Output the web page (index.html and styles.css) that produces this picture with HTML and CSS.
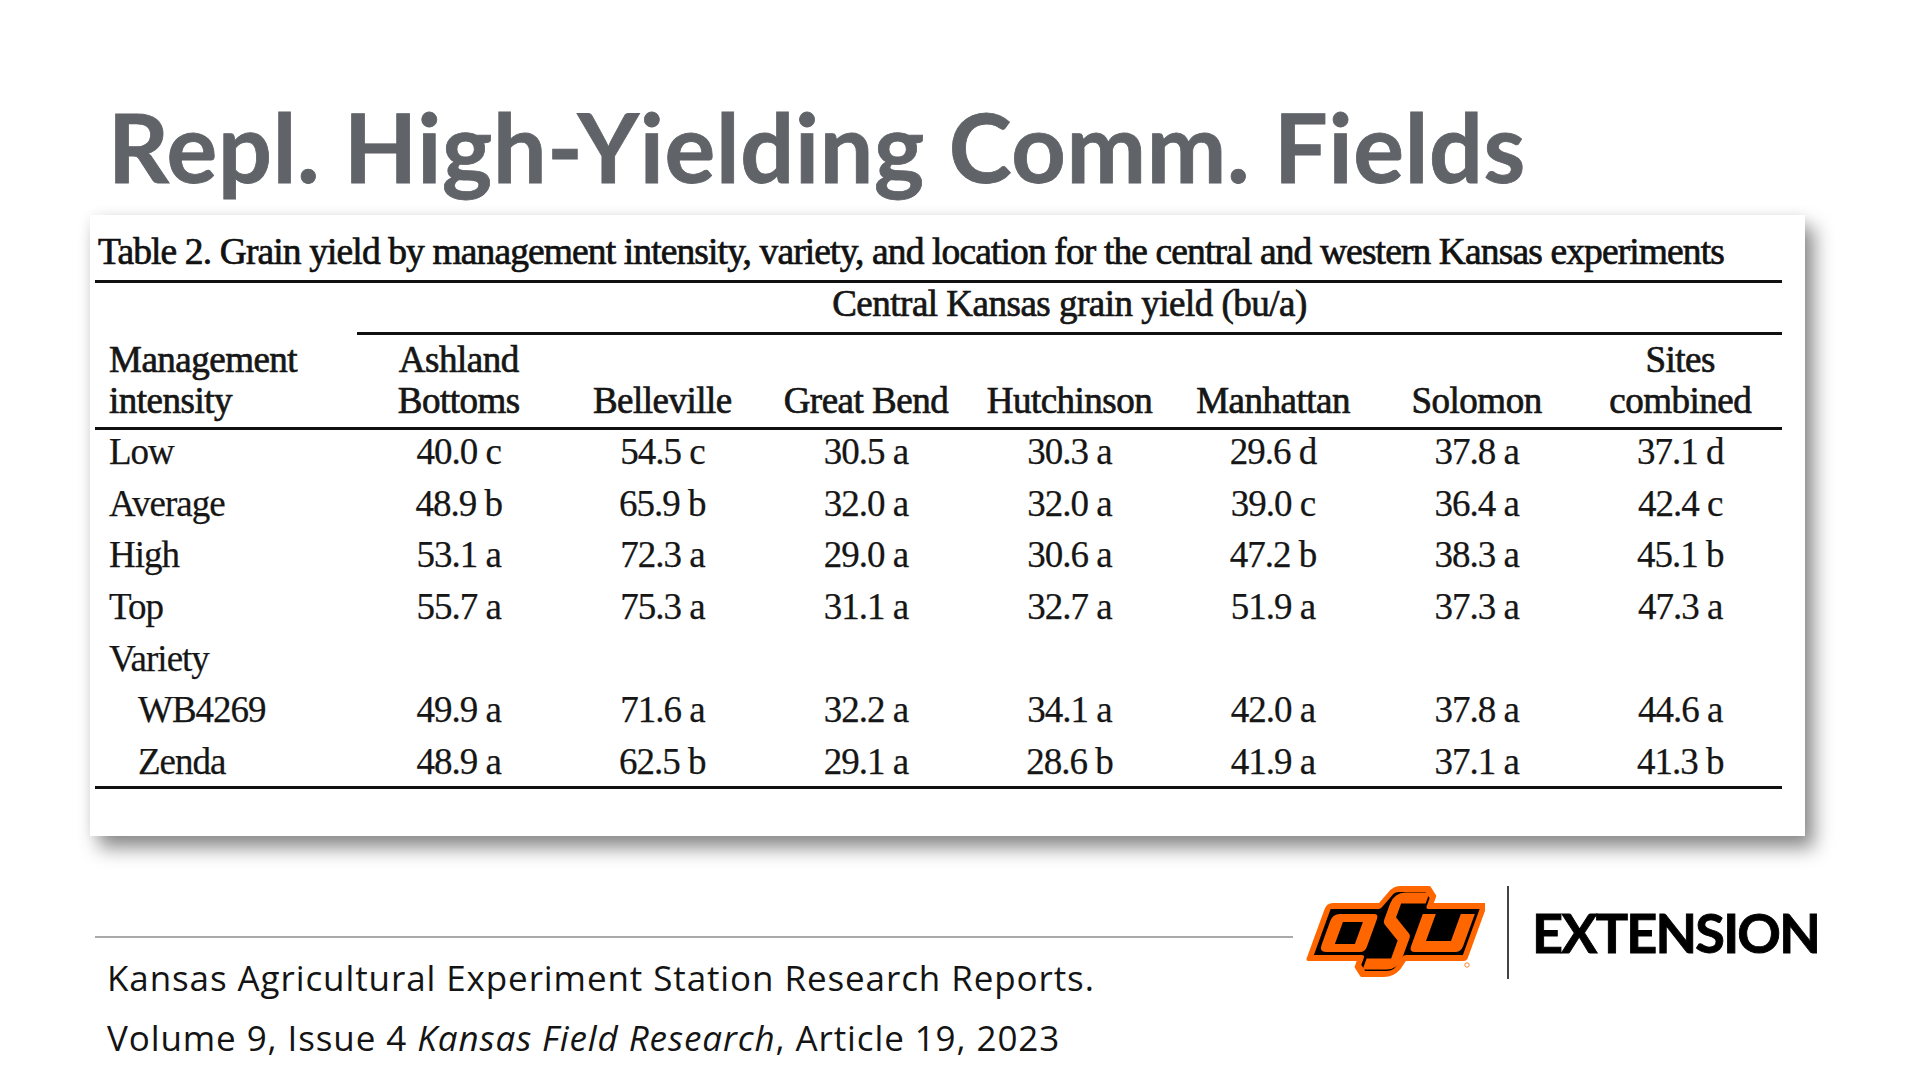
FILE: index.html
```html
<!DOCTYPE html>
<html lang="en">
<head>
<meta charset="utf-8">
<title>Repl. High-Yielding Comm. Fields</title>
<link rel="stylesheet" href="styles.css">
</head>
<body>
<main class="slide">
  <h1 class="title">Repl. High-Yielding Comm. Fields</h1>

  <section class="card">
    <p class="caption">Table 2. Grain yield by management intensity, variety, and location for the central and western Kansas experiments</p>
    <table class="yield">
      <colgroup>
        <col class="c-first">
        <col class="c-site"><col class="c-site"><col class="c-site"><col class="c-site"><col class="c-site"><col class="c-site"><col class="c-site">
      </colgroup>
      <thead>
        <tr class="group-row">
          <td class="blank"></td>
          <th colspan="7" class="group">Central Kansas grain yield (bu/a)</th>
        </tr>
        <tr class="head-row">
          <th class="lead">Management<br>intensity</th>
          <th>Ashland<br>Bottoms</th>
          <th>Belleville</th>
          <th>Great Bend</th>
          <th>Hutchinson</th>
          <th>Manhattan</th>
          <th>Solomon</th>
          <th>Sites<br>combined</th>
        </tr>
      </thead>
      <tbody>
        <tr><td class="lead">Low</td><td>40.0 c</td><td>54.5 c</td><td>30.5 a</td><td>30.3 a</td><td>29.6 d</td><td>37.8 a</td><td>37.1 d</td></tr>
        <tr><td class="lead">Average</td><td>48.9 b</td><td>65.9 b</td><td>32.0 a</td><td>32.0 a</td><td>39.0 c</td><td>36.4 a</td><td>42.4 c</td></tr>
        <tr><td class="lead">High</td><td>53.1 a</td><td>72.3 a</td><td>29.0 a</td><td>30.6 a</td><td>47.2 b</td><td>38.3 a</td><td>45.1 b</td></tr>
        <tr><td class="lead">Top</td><td>55.7 a</td><td>75.3 a</td><td>31.1 a</td><td>32.7 a</td><td>51.9 a</td><td>37.3 a</td><td>47.3 a</td></tr>
        <tr><td class="lead">Variety</td><td></td><td></td><td></td><td></td><td></td><td></td><td></td></tr>
        <tr><td class="lead sub">WB4269</td><td>49.9 a</td><td>71.6 a</td><td>32.2 a</td><td>34.1 a</td><td>42.0 a</td><td>37.8 a</td><td>44.6 a</td></tr>
        <tr class="last"><td class="lead sub">Zenda</td><td>48.9 a</td><td>62.5 b</td><td>29.1 a</td><td>28.6 b</td><td>41.9 a</td><td>37.1 a</td><td>41.3 b</td></tr>
      </tbody>
    </table>
  </section>

  <footer class="footer">
    <div class="cite">
      <div class="cite-rule"></div>
      <p class="cite-line">Kansas Agricultural Experiment Station Research Reports.</p>
      <p class="cite-line">Volume 9, Issue 4 <em>Kansas Field Research</em>, Article 19, 2023</p>
    </div>
    <div class="brand">
      <svg class="osu-logo" viewBox="0 0 180 93" width="180" height="93" aria-label="OSU">
        <g transform="skewX(-20)">
          <path d="M34,20 L82,20 L89,6 Q91,3 96,3 L124,3 L132,11 L132,20 L186,20 L186,72 L126,72 L123,82 Q120,88 112,88 L90,88 L82,80 L82,72 L31,72 L31,23 Q31,20 34,20 Z" fill="#000" stroke="#ff6600" stroke-width="6" stroke-linejoin="round"/>
          <path fill="#ff6600" fill-rule="evenodd" d="M45,28 L79,28 Q84,28 84,33 L84,61 Q84,66 79,66 L45,66 Q38,66 38,59 L38,35 Q38,28 45,28 Z M51,36 L71,36 L71,58 L51,58 Z"/>
          <path fill="none" stroke="#ff6600" stroke-width="11" stroke-linejoin="round" d="M127,12 L103,12 Q97,12 97,18 L97,34 L118,52 L118,72 Q118,78 112,78 L88,78"/>
          <path fill="#ff6600" d="M128,28 L141,28 L141,55 L166,55 L166,28 L180,28 L180,60 Q180,66 174,66 L134,66 Q128,66 128,60 Z"/>
        </g>
        <circle cx="162" cy="79" r="2.2" fill="none" stroke="#ff6600" stroke-width="0.8"/>
      </svg>
      <div class="divider"></div>
      <div class="ext">EXTENSION</div>
    </div>
  </footer>
</main>
</body>
</html>
```

FILE: styles.css
```css
* { box-sizing: border-box; }

html, body {
  margin: 0;
  padding: 0;
}

body {
  width: 1920px;
  height: 1080px;
  overflow: hidden;
  background: #ffffff;
  font-family: "Liberation Serif", "Times New Roman", serif;
}

.slide {
  padding-top: 96px;
}

.title {
  margin: 0 0 0 108px;
  font-family: Lato, "Open Sans", sans-serif;
  font-weight: 700;
  font-size: 95px;
  line-height: 100px;
  letter-spacing: 0.7px;
  color: #606368;
  white-space: nowrap;
  -webkit-text-stroke: 0.8px #606368;
}

.card {
  margin: 19px 0 0 90px;
  width: 1715px;
  height: 621px;
  padding: 12px 23px 0 5px;
  background: #ffffff;
  box-shadow: 9px 12px 18px rgba(0, 0, 0, 0.45), 0 0 12px rgba(0, 0, 0, 0.06);
}

.caption {
  margin: 0;
  padding: 0 0 3px 3px;
  font-size: 37.5px;
  line-height: 50px;
  letter-spacing: -0.88px;
  color: #111111;
  white-space: nowrap;
  border-bottom: 3px solid #111111;
  -webkit-text-stroke: 0.7px #111111;
}

.yield {
  width: 1687px;
  border-collapse: separate;
  border-spacing: 0;
  table-layout: fixed;
  font-size: 37px;
  color: #161616;
}

.c-first { width: 262px; }

.yield th,
.yield td {
  padding: 0;
  text-align: center;
  white-space: nowrap;
}

.yield th {
  font-weight: normal;
  letter-spacing: -0.5px;
  -webkit-text-stroke: 0.7px #161616;
}

.yield td {
  letter-spacing: -1px;
  -webkit-text-stroke: 0.25px #161616;
}

.group-row th,
.group-row td {
  line-height: 41px;
  padding-bottom: 8px;
}

.group-row .group {
  border-bottom: 3px solid #111111;
}

.head-row th {
  line-height: 41px;
  padding-top: 4px;
  padding-bottom: 6px;
  vertical-align: bottom;
  border-bottom: 3px solid #111111;
}

.yield tbody td {
  line-height: 44px;
  padding-bottom: 7.7px;
}

.yield tbody tr.last td {
  padding-bottom: 1.8px;
  border-bottom: 3px solid #111111;
}

.yield .lead {
  text-align: left;
  padding-left: 14px;
}

.yield .lead.sub {
  padding-left: 43px;
}

.footer {
  display: flex;
  align-items: flex-start;
  margin: 50px 0 0 95px;
}

.cite {
  width: 1198px;
}

.cite-rule {
  height: 2px;
  margin-top: 50px;
  background: #a9a9a9;
}

.cite-line {
  margin: 0;
  padding-left: 12px;
  font-family: "Open Sans", Lato, sans-serif;
  font-size: 35px;
  line-height: 60px;
  letter-spacing: 0.9px;
  color: #141414;
  white-space: nowrap;
}

.cite-line:first-of-type {
  margin-top: 10px;
}

.brand {
  display: flex;
  align-items: center;
  margin-left: 12px;
}

.osu-logo {
  display: block;
}

.divider {
  width: 2px;
  height: 93px;
  margin-left: 22px;
  background: #444444;
}

.ext {
  margin-left: 23px;
  font-family: Lato, "Open Sans", sans-serif;
  font-weight: 700;
  font-size: 54px;
  line-height: 57px;
  letter-spacing: -1.8px;
  color: #000000;
  -webkit-text-stroke: 0.9px #000000;
}
```
